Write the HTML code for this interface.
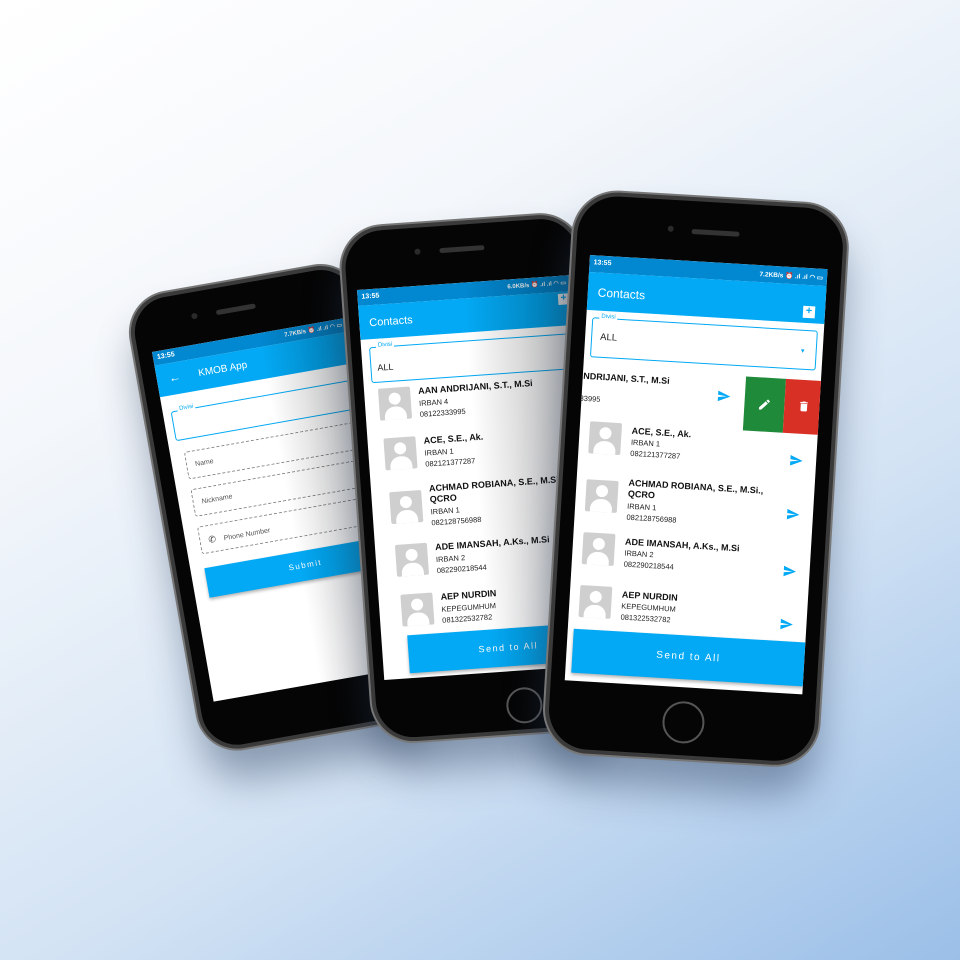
<!DOCTYPE html>
<html><head><meta charset="utf-8"><style>
*{box-sizing:border-box;margin:0;padding:0}
body{width:960px;height:960px;overflow:hidden;font-family:"Liberation Sans",sans-serif;
background:linear-gradient(150deg,#ffffff 0%,#f4f7fb 30%,#d3e3f4 65%,#9bbfe8 100%);position:relative}
.ph{position:absolute;transform-origin:0 0}
.body{position:absolute;background:#050505;border:4px solid #3a3a3a;box-shadow:0 0 0 2px #777,0 30px 40px rgba(40,60,90,.45)}
.spk{position:absolute;height:5px;border-radius:3px;background:#333}
.cam{position:absolute;width:6px;height:6px;border-radius:50%;background:#2a2a2a}
.home{position:absolute;width:36px;height:36px;border-radius:50%;border:2px solid #555}
.scr{position:absolute;left:0;top:0;background:#fff;overflow:hidden}
.sb{position:absolute;left:0;top:0;width:100%;background:#0288d1;color:#fff;font-size:7px;font-weight:bold}
.ab{position:absolute;left:0;width:100%;background:#03a9f4;color:#fff}
.dd{position:absolute;border:1.5px solid #03a9f4;border-radius:3px}
.dd .lb{position:absolute;top:-5px;left:6px;background:#fff;padding:0 2px;font-size:6px;color:#03a9f4}
.row{position:absolute;left:0;width:100%}
.av{position:absolute;width:32px;height:32px;background:#cfcfcf;border-radius:2px;overflow:hidden}
.av:before{content:"";position:absolute;left:10px;top:5px;width:12px;height:12px;border-radius:50%;background:#fff}
.av:after{content:"";position:absolute;left:5px;top:19px;width:22px;height:16px;border-radius:10px 10px 2px 2px;background:#fff}
.nm{position:absolute;font-size:9px;font-weight:bold;color:#111;line-height:11px;white-space:nowrap}
.sub{position:absolute;font-size:7.5px;color:#222;line-height:11px;white-space:nowrap}
.snd{position:absolute;width:16px;height:14px}
.btn{position:absolute;background:#03a9f4;color:#fff;font-size:9px;letter-spacing:1.5px;text-align:center;box-shadow:0 2px 3px rgba(0,0,0,.3)}
.shade{position:absolute;left:0;top:0;width:100%;height:100%;pointer-events:none}
.fld{position:absolute;border:1px dashed #888;border-radius:3px;font-size:7px;color:#555}
</style></head><body>

<!-- LEFT PHONE -->
<div class="ph" style="left:152px;top:352px;transform:rotate(-10deg)">
  <div class="body" style="left:-18px;top:-56px;width:232px;height:462px;border-radius:40px"></div>
  <div class="spk" style="left:70px;top:-30px;width:40px"></div>
  <div class="cam" style="left:45px;top:-31px"></div>
  <div class="home" style="left:158px;top:360px"></div>
  <div class="scr" style="width:196px;height:355px">
    <div class="sb" style="height:14px;padding:3px 4px">13:55<span style="position:absolute;right:4px;top:3px;font-size:6px">7.7KB/s ⏰ .ıl .ıl ◠ ▭</span></div>
    <div class="ab" style="top:14px;height:32px"><span style="position:absolute;left:12px;top:8px;font-size:12px">←</span><span style="position:absolute;left:42px;top:10px;font-size:10px">KMOB App</span><span style="position:absolute;right:6px;top:26px;font-size:6px;color:#03a9f4">▼</span></div>
    <div class="dd" style="left:8px;top:62px;width:200px;height:30px"><span class="lb">Divisi</span></div>
    <div class="fld" style="left:14px;top:104px;width:200px;height:28px;padding:10px 8px">Name</div>
    <div class="fld" style="left:14px;top:142px;width:200px;height:28px;padding:10px 8px">Nickname</div>
    <div class="fld" style="left:14px;top:180px;width:200px;height:28px;padding:9px 8px"><span style="font-size:9px;color:#333">✆</span>&nbsp;&nbsp;&nbsp; Phone Number</div>
    <div class="btn" style="left:14px;top:222px;width:200px;height:30px;line-height:30px;font-size:8px">Submit</div>
    <div class="shade" style="background:linear-gradient(90deg,rgba(0,0,0,0) 55%,rgba(0,0,0,.28) 100%)"></div>
  </div>
</div>

<!-- MIDDLE PHONE -->
<div class="ph" style="left:357px;top:290px;transform:rotate(-4deg)">
  <div class="body" style="left:-14px;top:-62px;width:241px;height:516px;border-radius:42px"></div>
  <div class="spk" style="left:85px;top:-36px;width:45px"></div>
  <div class="cam" style="left:60px;top:-37px"></div>
  <div class="home" style="left:120px;top:408px"></div>
  <div class="scr" style="width:213px;height:391px">
    <div class="sb" style="height:16px;padding:4px 4px">13:55<span style="position:absolute;right:4px;top:4px;font-size:6px">6.0KB/s ⏰ .ıl .ıl ◠ ▭</span></div>
    <div class="ab" style="top:16px;height:34px"><span style="position:absolute;left:10px;top:12px;font-size:11px">Contacts</span><span style="position:absolute;right:2px;top:2px;width:11px;height:11px;background:#fff;color:#03a9f4;font-size:10px;line-height:10px;text-align:center;font-weight:bold">+</span></div>
    <div class="dd" style="left:8px;top:58px;width:210px;height:36px"><span class="lb">Divisi</span><span style="position:absolute;left:6px;top:15px;font-size:9px;color:#222">ALL</span></div>
    <div class="row" style="top:100px"><div class="av" style="left:14px;top:0"></div><div class="nm" style="left:54px;top:0">AAN ANDRIJANI, S.T., M.Si</div><div class="sub" style="left:54px;top:12px">IRBAN 4<br>08122333995</div></div>
    <div class="row" style="top:150px"><div class="av" style="left:16px;top:0"></div><div class="nm" style="left:56px;top:0">ACE, S.E., Ak.</div><div class="sub" style="left:56px;top:12px">IRBAN 1<br>082121377287</div></div>
    <div class="row" style="top:198px"><div class="av" style="left:18px;top:6px"></div><div class="nm" style="left:58px;top:0">ACHMAD ROBIANA, S.E., M.Si.,<br>QCRO</div><div class="sub" style="left:58px;top:23px">IRBAN 1<br>082128756988</div></div>
    <div class="row" style="top:257px"><div class="av" style="left:20px;top:0"></div><div class="nm" style="left:60px;top:0">ADE IMANSAH, A.Ks., M.Si</div><div class="sub" style="left:60px;top:12px">IRBAN 2<br>082290218544</div></div>
    <div class="row" style="top:307px"><div class="av" style="left:22px;top:0"></div><div class="nm" style="left:62px;top:0">AEP NURDIN</div><div class="sub" style="left:62px;top:12px">KEPEGUMHUM<br>081322532782</div></div>
    <div class="btn" style="left:26px;top:348px;width:200px;height:38px;line-height:38px">Send to All</div>
    <div class="shade" style="background:linear-gradient(90deg,rgba(0,0,0,0) 50%,rgba(0,0,0,.3) 100%)"></div>
  </div>
</div>

<!-- RIGHT PHONE -->
<div class="ph" style="left:590px;top:255px;transform:rotate(3.4deg)">
  <div class="body" style="left:-18px;top:-64px;width:274px;height:562px;border-radius:44px"></div>
  <div class="spk" style="left:100px;top:-32px;width:48px"></div>
  <div class="cam" style="left:76px;top:-34px"></div>
  <div class="home" style="left:100px;top:440px;width:42px;height:42px"></div>
  <div class="scr" style="width:238px;height:426px">
    <div class="sb" style="height:17px;padding:4px 4px">13:55<span style="position:absolute;right:4px;top:5px;font-size:6.5px">7.2KB/s ⏰ .ıl .ıl ◠ ▭</span></div>
    <div class="ab" style="top:17px;height:38px"><span style="position:absolute;left:10px;top:13px;font-size:12px">Contacts</span><span style="position:absolute;right:10px;top:21px;width:12px;height:12px;background:#fff;color:#03a9f4;font-size:11px;line-height:11px;text-align:center;font-weight:bold">+</span></div>
    <div class="dd" style="left:6px;top:62px;width:226px;height:40px"><span class="lb">Divisi</span><span style="position:absolute;left:8px;top:13px;font-size:9.5px;color:#222">ALL</span><span style="position:absolute;right:10px;top:18px;font-size:6px;color:#03a9f4">▼</span></div>
    <div class="row" style="top:112px;height:52px">
      <div class="nm" style="left:-6px;top:4px">ANDRIJANI, S.T., M.Si</div><div class="sub" style="left:-6px;top:15px">4<br>333995</div>
      <svg class="snd" style="left:134px;top:14px" viewBox="0 0 24 24"><path d="M2 21l21-9L2 3v7l15 2-15 2z" fill="#03a9f4"/></svg>
      <div style="position:absolute;left:163px;top:0;width:40px;height:54px;background:#1e8a3a"><svg style="position:absolute;left:13px;top:20px" width="14" height="14" viewBox="0 0 24 24"><path d="M3 17.25V21h3.75L17.8 9.94l-3.75-3.75L3 17.25zM20.7 7.04a1 1 0 000-1.41l-2.34-2.34a1 1 0 00-1.41 0l-1.83 1.83 3.75 3.75 1.83-1.83z" fill="#fff"/></svg></div>
      <div style="position:absolute;left:203px;top:0;width:40px;height:54px;background:#d93025"><svg style="position:absolute;left:13px;top:20px" width="13" height="13" viewBox="0 0 24 24"><path d="M6 19c0 1.1.9 2 2 2h8c1.1 0 2-.9 2-2V7H6v12zM19 4h-3.5l-1-1h-5l-1 1H5v2h14V4z" fill="#fff"/></svg></div>
    </div>
    <div class="row" style="top:166px"><div class="av" style="left:10px;top:0"></div><div class="nm" style="left:52px;top:2px">ACE, S.E., Ak.</div><div class="sub" style="left:52px;top:13px">IRBAN 1<br>082121377287</div><svg class="snd" style="left:210px;top:20px" viewBox="0 0 24 24"><path d="M2 21l21-9L2 3v7l15 2-15 2z" fill="#03a9f4"/></svg></div>
    <div class="row" style="top:220px"><div class="av" style="left:10px;top:4px"></div><div class="nm" style="left:52px;top:0">ACHMAD ROBIANA, S.E., M.Si.,<br>QCRO</div><div class="sub" style="left:52px;top:23px">IRBAN 1<br>082128756988</div><svg class="snd" style="left:210px;top:20px" viewBox="0 0 24 24"><path d="M2 21l21-9L2 3v7l15 2-15 2z" fill="#03a9f4"/></svg></div>
    <div class="row" style="top:277px"><div class="av" style="left:10px;top:0"></div><div class="nm" style="left:52px;top:2px">ADE IMANSAH, A.Ks., M.Si</div><div class="sub" style="left:52px;top:13px">IRBAN 2<br>082290218544</div><svg class="snd" style="left:210px;top:20px" viewBox="0 0 24 24"><path d="M2 21l21-9L2 3v7l15 2-15 2z" fill="#03a9f4"/></svg></div>
    <div class="row" style="top:330px"><div class="av" style="left:10px;top:0"></div><div class="nm" style="left:52px;top:2px">AEP NURDIN</div><div class="sub" style="left:52px;top:13px">KEPEGUMHUM<br>081322532782</div><svg class="snd" style="left:210px;top:20px" viewBox="0 0 24 24"><path d="M2 21l21-9L2 3v7l15 2-15 2z" fill="#03a9f4"/></svg></div>
    <div class="btn" style="left:6px;top:374px;width:232px;height:44px;line-height:44px;font-size:10px">Send to All</div>
  </div>
</div>
</body></html>
